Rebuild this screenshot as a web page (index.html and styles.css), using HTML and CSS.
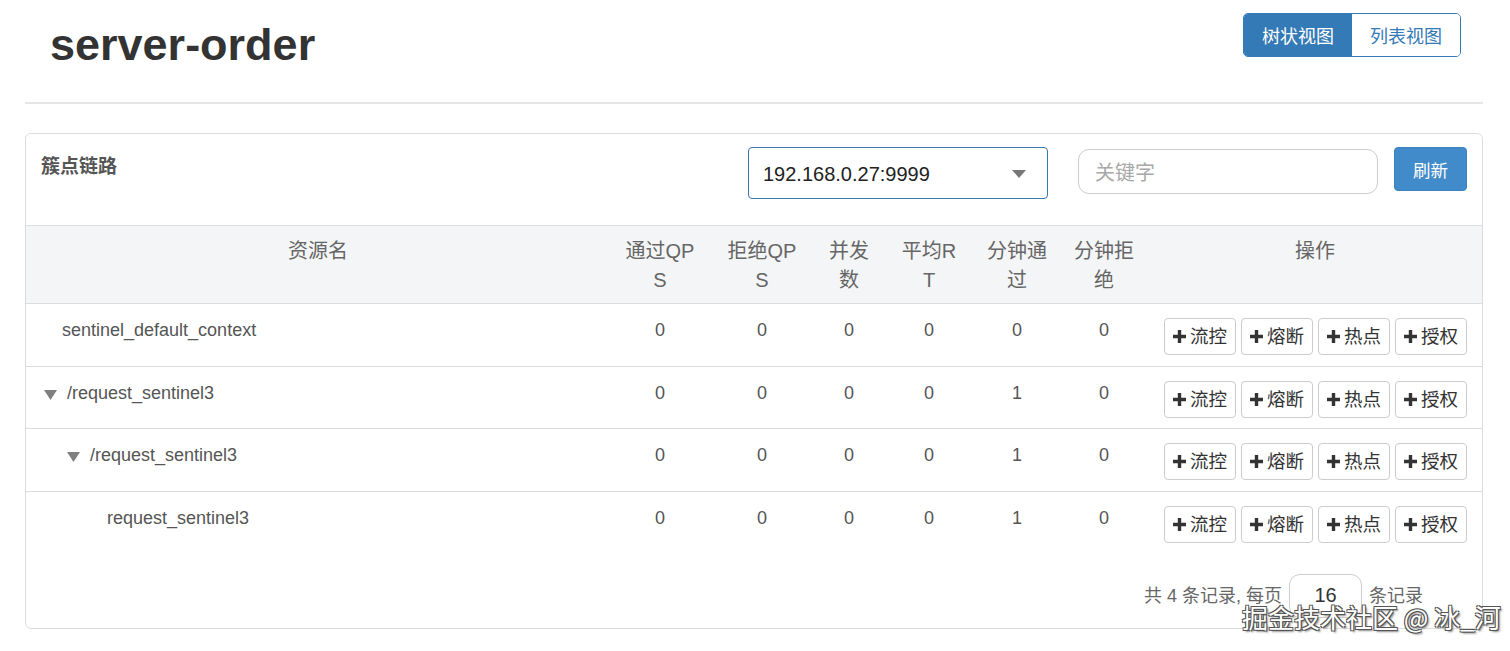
FILE: index.html
```html
<!DOCTYPE html>
<html lang="zh-CN">
<head>
<meta charset="utf-8">
<title>server-order</title>
<link rel="stylesheet" href="styles.css">
</head>
<body>
<div class="page">
  <div class="page-header">
    <h1 class="app-title">server-order</h1>
    <div class="view-toggle">
      <span class="view-btn active">树状视图</span>
      <span class="view-btn">列表视图</span>
    </div>
  </div>
  <div class="divider"></div>

  <div class="panel">
    <div class="panel-heading">
      <div class="panel-title">簇点链路</div>
      <div class="machine-select">
        <span class="select-value">192.168.0.27:9999</span>
        <svg class="select-caret" width="14" height="8" viewBox="0 0 14 8"><path d="M0 0h14L7 8z" fill="#777"/></svg>
      </div>
      <div class="search-input">关键字</div>
      <span class="refresh-btn">刷新</span>
    </div>

    <table class="res-table">
      <colgroup>
        <col class="c-name"><col class="c-pass"><col class="c-block"><col class="c-thread"><col class="c-rt"><col class="c-mpass"><col class="c-mblock"><col class="c-ops">
      </colgroup>
      <thead>
        <tr>
          <th>资源名</th>
          <th>通过QP<br>S</th>
          <th>拒绝QP<br>S</th>
          <th>并发<br>数</th>
          <th>平均R<br>T</th>
          <th>分钟通<br>过</th>
          <th>分钟拒<br>绝</th>
          <th>操作</th>
        </tr>
      </thead>
      <tbody>
        <tr>
          <td class="name lvl-a">sentinel_default_context</td>
          <td>0</td><td>0</td><td>0</td><td>0</td><td>0</td><td>0</td>
          <td class="ops"><div class="ops-row">
            <span class="op-btn"><svg class="plus" width="13" height="13" viewBox="0 0 13 13"><path d="M4.8 0h3.4v4.8H13v3.4H8.2V13H4.8V8.2H0V4.8h4.8z" fill="#333"/></svg>流控</span>
            <span class="op-btn"><svg class="plus" width="13" height="13" viewBox="0 0 13 13"><path d="M4.8 0h3.4v4.8H13v3.4H8.2V13H4.8V8.2H0V4.8h4.8z" fill="#333"/></svg>熔断</span>
            <span class="op-btn"><svg class="plus" width="13" height="13" viewBox="0 0 13 13"><path d="M4.8 0h3.4v4.8H13v3.4H8.2V13H4.8V8.2H0V4.8h4.8z" fill="#333"/></svg>热点</span>
            <span class="op-btn"><svg class="plus" width="13" height="13" viewBox="0 0 13 13"><path d="M4.8 0h3.4v4.8H13v3.4H8.2V13H4.8V8.2H0V4.8h4.8z" fill="#333"/></svg>授权</span>
          </div></td>
        </tr>
        <tr>
          <td class="name lvl-b"><svg class="tree-caret" width="13" height="10" viewBox="0 0 13 10"><path d="M0 0h13L6.5 10z" fill="#808080"/></svg>/request_sentinel3</td>
          <td>0</td><td>0</td><td>0</td><td>0</td><td>1</td><td>0</td>
          <td class="ops"><div class="ops-row">
            <span class="op-btn"><svg class="plus" width="13" height="13" viewBox="0 0 13 13"><path d="M4.8 0h3.4v4.8H13v3.4H8.2V13H4.8V8.2H0V4.8h4.8z" fill="#333"/></svg>流控</span>
            <span class="op-btn"><svg class="plus" width="13" height="13" viewBox="0 0 13 13"><path d="M4.8 0h3.4v4.8H13v3.4H8.2V13H4.8V8.2H0V4.8h4.8z" fill="#333"/></svg>熔断</span>
            <span class="op-btn"><svg class="plus" width="13" height="13" viewBox="0 0 13 13"><path d="M4.8 0h3.4v4.8H13v3.4H8.2V13H4.8V8.2H0V4.8h4.8z" fill="#333"/></svg>热点</span>
            <span class="op-btn"><svg class="plus" width="13" height="13" viewBox="0 0 13 13"><path d="M4.8 0h3.4v4.8H13v3.4H8.2V13H4.8V8.2H0V4.8h4.8z" fill="#333"/></svg>授权</span>
          </div></td>
        </tr>
        <tr>
          <td class="name lvl-c"><svg class="tree-caret" width="13" height="10" viewBox="0 0 13 10"><path d="M0 0h13L6.5 10z" fill="#808080"/></svg>/request_sentinel3</td>
          <td>0</td><td>0</td><td>0</td><td>0</td><td>1</td><td>0</td>
          <td class="ops"><div class="ops-row">
            <span class="op-btn"><svg class="plus" width="13" height="13" viewBox="0 0 13 13"><path d="M4.8 0h3.4v4.8H13v3.4H8.2V13H4.8V8.2H0V4.8h4.8z" fill="#333"/></svg>流控</span>
            <span class="op-btn"><svg class="plus" width="13" height="13" viewBox="0 0 13 13"><path d="M4.8 0h3.4v4.8H13v3.4H8.2V13H4.8V8.2H0V4.8h4.8z" fill="#333"/></svg>熔断</span>
            <span class="op-btn"><svg class="plus" width="13" height="13" viewBox="0 0 13 13"><path d="M4.8 0h3.4v4.8H13v3.4H8.2V13H4.8V8.2H0V4.8h4.8z" fill="#333"/></svg>热点</span>
            <span class="op-btn"><svg class="plus" width="13" height="13" viewBox="0 0 13 13"><path d="M4.8 0h3.4v4.8H13v3.4H8.2V13H4.8V8.2H0V4.8h4.8z" fill="#333"/></svg>授权</span>
          </div></td>
        </tr>
        <tr>
          <td class="name lvl-d">request_sentinel3</td>
          <td>0</td><td>0</td><td>0</td><td>0</td><td>1</td><td>0</td>
          <td class="ops"><div class="ops-row">
            <span class="op-btn"><svg class="plus" width="13" height="13" viewBox="0 0 13 13"><path d="M4.8 0h3.4v4.8H13v3.4H8.2V13H4.8V8.2H0V4.8h4.8z" fill="#333"/></svg>流控</span>
            <span class="op-btn"><svg class="plus" width="13" height="13" viewBox="0 0 13 13"><path d="M4.8 0h3.4v4.8H13v3.4H8.2V13H4.8V8.2H0V4.8h4.8z" fill="#333"/></svg>熔断</span>
            <span class="op-btn"><svg class="plus" width="13" height="13" viewBox="0 0 13 13"><path d="M4.8 0h3.4v4.8H13v3.4H8.2V13H4.8V8.2H0V4.8h4.8z" fill="#333"/></svg>热点</span>
            <span class="op-btn"><svg class="plus" width="13" height="13" viewBox="0 0 13 13"><path d="M4.8 0h3.4v4.8H13v3.4H8.2V13H4.8V8.2H0V4.8h4.8z" fill="#333"/></svg>授权</span>
          </div></td>
        </tr>
      </tbody>
    </table>

    <div class="panel-footer">
      <span class="pager-text">共 4 条记录, 每页</span>
      <span class="page-size">16</span>
      <span class="pager-text">条记录</span>
    </div>
  </div>
</div>
<div class="watermark">掘金技术社区 @ 冰_河</div>
</body>
</html>
```
FILE: styles.css
```css
html, body {
  margin: 0;
  padding: 0;
  background: #fff;
}
body {
  font-family: "Liberation Sans", Arial, "Noto Sans CJK SC", sans-serif;
  font-size: 17.5px;
  color: #333;
  width: 1510px;
  height: 651px;
  overflow: hidden;
  position: relative;
}
.page {
  margin-left: 25px;
  width: 1458px;
}
.page-header {
  display: flex;
  justify-content: space-between;
  align-items: flex-start;
  height: 102px;
}
.app-title {
  margin: 20px 0 0 25px;
  font-size: 45px;
  line-height: 1.1;
  font-weight: bold;
  color: #333;
}
.view-toggle {
  display: flex;
  margin-top: 13px;
  margin-right: 22px;
  border: 1px solid #337ab7;
  border-radius: 5px;
  overflow: hidden;
  height: 44px;
  box-sizing: border-box;
}
.view-btn {
  display: flex;
  align-items: center;
  justify-content: center;
  width: 108px;
  font-size: 18px;
  color: #337ab7;
  background: #fff;
}
.view-btn.active {
  background: #337ab7;
  color: #fff;
}
.divider {
  border-top: 2px solid #e6e6e6;
  margin-bottom: 29px;
}
.panel {
  border: 1px solid #dcdcdc;
  border-radius: 6px;
  height: 496px;
  box-sizing: border-box;
  position: relative;
}
.panel-heading {
  display: flex;
  align-items: flex-start;
  height: 91px;
  box-sizing: border-box;
  padding: 13px 15px 0 15px;
}
.panel-title {
  flex: 1;
  font-size: 19px;
  font-weight: bold;
  color: #555;
  margin-top: 4px;
}
.machine-select {
  width: 300px;
  height: 52px;
  box-sizing: border-box;
  border: 1px solid #3a78b0;
  border-radius: 4px;
  display: flex;
  align-items: center;
  justify-content: space-between;
  padding: 2px 21px 0 14px;
}
.select-value {
  font-size: 20px;
  color: #222;
}
.search-input {
  width: 300px;
  height: 45px;
  box-sizing: border-box;
  margin: 2px 0 0 30px;
  border: 1px solid #ccc;
  border-radius: 11px;
  padding: 0 16px;
  display: flex;
  align-items: center;
  font-size: 20px;
  color: #a8a8a8;
}
.refresh-btn {
  width: 73px;
  height: 44px;
  box-sizing: border-box;
  margin-left: 16px;
  background: #428bca;
  border: 1px solid #3d82bd;
  border-radius: 4px;
  color: #fff;
  font-size: 17.5px;
  display: flex;
  align-items: center;
  justify-content: center;
}
.res-table {
  width: 1456px;
  border-collapse: collapse;
  table-layout: fixed;
}
.c-name { width: 584px; }
.c-pass { width: 100px; }
.c-block { width: 104px; }
.c-thread { width: 70px; }
.c-rt { width: 90px; }
.c-mpass { width: 86px; }
.c-mblock { width: 88px; }
.c-ops { width: 334px; }
.res-table thead th {
  background: #f4f5f7;
  border-top: 1px solid #dcdcdc;
  border-bottom: 1px solid #dcdcdc;
  font-weight: normal;
  font-size: 20px;
  line-height: 29px;
  color: #666;
  padding: 11px 0 8px;
  vertical-align: top;
  text-align: center;
  height: 78px;
  box-sizing: border-box;
}
.res-table tbody td {
  height: 62.5px;
  box-sizing: border-box;
  padding: 12px 0 0;
  vertical-align: top;
  text-align: center;
  font-size: 18px;
  line-height: 29px;
  color: #555;
  border-bottom: 1px solid #dcdcdc;
}
.res-table tbody tr:last-child td {
  border-bottom: none;
}
.res-table tbody td.name {
  text-align: left;
}
.lvl-a { padding-left: 36px !important; }
.lvl-b { padding-left: 18px !important; }
.lvl-c { padding-left: 41px !important; }
.lvl-d { padding-left: 81px !important; }
.tree-caret {
  margin-right: 10px;
  vertical-align: -1px;
}
.res-table tbody td.ops {
  padding: 14px 0 0 16px;
  text-align: left;
}
.ops-row {
  display: flex;
  gap: 5px;
}
.op-btn {
  width: 72px;
  height: 37px;
  box-sizing: border-box;
  border: 1px solid #ccc;
  border-radius: 4px;
  background: #fff;
  display: flex;
  align-items: center;
  justify-content: center;
  font-size: 18.5px;
  color: #333;
}
.plus {
  margin-right: 4px;
  flex: none;
}
.panel-footer {
  display: flex;
  justify-content: flex-end;
  align-items: flex-start;
  padding: 20px 59px 0 0;
}
.pager-text {
  font-size: 18px;
  color: #666;
  margin-top: 7px;
}
.page-size {
  width: 73px;
  height: 44px;
  box-sizing: border-box;
  margin: 0 7px;
  border: 1px solid #ccc;
  border-radius: 11px;
  font-size: 20px;
  color: #333;
  text-align: center;
  padding-top: 9px;
}
.watermark {
  position: absolute;
  left: 1242px;
  top: 600px;
  font-family: "Noto Sans CJK SC", sans-serif;
  font-size: 26px;
  line-height: 34px;
  color: #fff;
  text-shadow: -1px -1px 0 #555, 1px -1px 0 #555, -1px 1px 0 #555, 1px 1px 0 #555, 2px 2px 2px #888;
  white-space: nowrap;
}
```
